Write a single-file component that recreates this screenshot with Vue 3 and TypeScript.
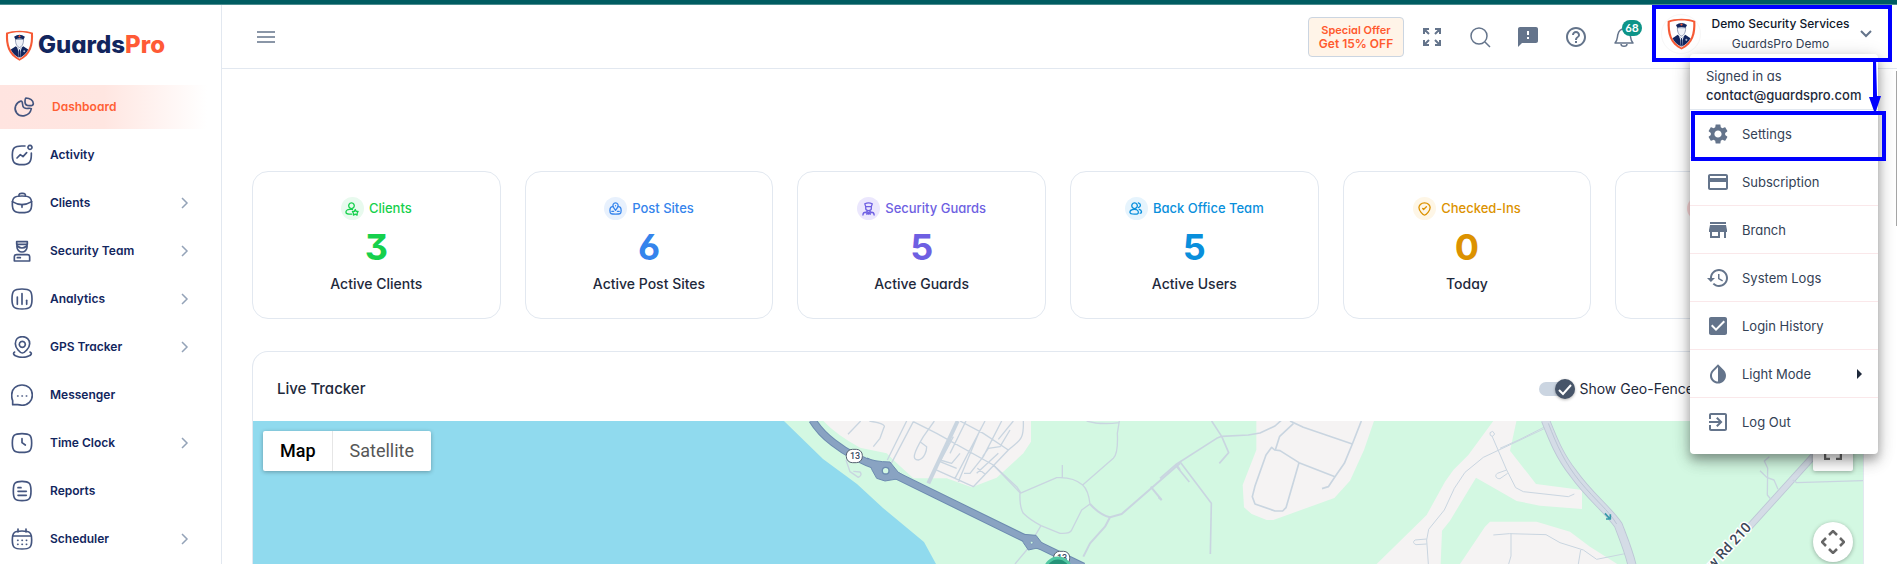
<script setup lang="ts">
import { ref } from 'vue'

interface NavItem { label: string; paths: string[]; expandable?: boolean; active?: boolean }
interface Stat { title: string; value: string; caption: string; color: string; tint: string; paths: string[] }
interface MenuItem { label: string; path: string; submenu?: boolean }

const nav: NavItem[] = [
  { label: 'Dashboard', active: true, paths: ['M24 15C8 20 1 38 11 51C22 65 50 62 55 38C48 34 42 41 33 35C25 29 32 16 24 15Z', 'M39 6C51 6 61 14 61 23C61 28 55 29 49 29C42 29 36 26 36 18C36 12 36 7 39 6Z'] },
  { label: 'Activity', paths: ['M42 6H32C10 6 4 12 4 33C4 55 10 62 32 62C54 62 61 55 61 33V27', 'M18 42L28 32L36 38L47 26', 'M57 4a6 6 0 1 1-.1 0Z'] },
  { label: 'Clients', expandable: true, paths: ['M24 12V8Q25 4 31 4H36Q42 4 43 8V12', 'M33 12C10 12 4 17 4 36C4 56 10 62 33 62C56 62 62 56 62 36C62 17 56 12 33 12Z', 'M4 29Q33 47 62 29', 'M33 38V46'] },
  { label: 'Security Team', expandable: true, paths: ['M17 5H49V13H17Z', 'M18 13V22C18 29 25 36 33 36S48 29 48 22V13', 'M19 18Q33 30 47 18', 'M17 44H49Q56 44 56 50V63H10V50Q10 44 17 44Z', 'M19 53H28'] },
  { label: 'Analytics', expandable: true, paths: ['M33 3C8 3 3 9 3 33S8 63 33 63S63 57 63 33S58 3 33 3Z', 'M19 27V49', 'M33 17V49', 'M47 37V49'] },
  { label: 'GPS Tracker', expandable: true, paths: ['M34 2C21 2 13 11 13 23C13 36 28 51 34 51S56 36 56 23C56 11 47 2 34 2Z', 'M34 16a9 9 0 1 1-.1 0Z', 'M11 48C5 51 8 58 15 60C27 65 42 65 53 60C61 58 64 51 57 48'] },
  { label: 'Messenger', paths: ['M2 33C2 15 15 3 33 3S64 15 64 33S51 64 33 64Q26 62 20 62H5V50Q2 44 2 33Z', 'M20 36H21', 'M33 36H34', 'M46 36H47'] },
  { label: 'Time Clock', expandable: true, paths: ['M33 5C9 5 4 10 4 33S9 61 33 61S62 56 62 33S57 5 33 5Z', 'M33 20V32L43 39'] },
  { label: 'Reports', paths: ['M33 4C11 4 7 10 7 33S11 62 33 62S60 56 60 33S55 4 33 4Z', 'M21 23H30', 'M21 34H46', 'M21 46H46'] },
  { label: 'Scheduler', expandable: true, paths: ['M33 9C9 9 4 14 4 36S9 63 33 63S62 58 62 36S57 9 33 9Z', 'M5 24H61', 'M21 3V12', 'M45 3V12', 'M20 37H21', 'M33 37H34', 'M46 37H47', 'M20 49H21', 'M33 49H34', 'M46 49H47'] },
]

const stats: Stat[] = [
  { title: 'Clients', value: '3', caption: 'Active Clients', color: '#16d04c', tint: '#e8faee', paths: ['M7 1a3 3 0 1 1-.1 0Z', 'M8 8H5C2 8 1 10 1 11C1 13 3 13 7 13', 'M11 8L12 10L14 10L13 12L13 14L11 13L9 14L9 12L8 10L10 10Z'] },
  { title: 'Post Sites', value: '6', caption: 'Active Post Sites', color: '#3584ec', tint: '#e8f1fd', paths: ['M4 5C1 5 1 7 1 9C1 13 2 13 7 13S13 13 13 9C13 7 13 5 10 5', 'M7 9L5 6C3 3 5 1 7 1S11 3 9 6Z', 'M7 4V4.1', 'M3 10H5M9 10H11'] },
  { title: 'Security Guards', value: '5', caption: 'Active Guards', color: '#6e5fe2', tint: '#ebe7fd', paths: ['M3 2Q7 0 11 2L10 5H4Z', 'M4 5V7C4 10 10 10 10 7V5', 'M1 14Q1 11 4 11L7 13L10 11Q13 11 13 14', 'M5 10L9 13', 'M9 10L5 13'] },
  { title: 'Back Office Team', value: '5', caption: 'Active Users', color: '#098fdc', tint: '#e6f4fd', paths: ['M6 1a3 3 0 1 1-.1 0Z', 'M6 8C2 8 1 10 1 11C1 13 3 13 6 13S10 13 10 11C10 10 9 8 6 8Z', 'M10 1C13 2 13 5 10 6', 'M11 8C14 9 14 12 12 12'] },
  { title: 'Checked-Ins', value: '0', caption: 'Today', color: '#dc9200', tint: '#fef6e6', paths: ['M7 1C3 1 1 4 1 6C1 9 5 14 7 14S13 9 13 6C13 4 11 1 7 1Z', 'M5 7L6 8L9 5'] },
  { title: '', value: '', caption: '', color: '#e5484d', tint: '#fdd9da', paths: [] },
]

const menu: MenuItem[] = [
  { label: 'Settings', path: 'M19.14 12.94c.04-.3.06-.61.06-.94 0-.32-.02-.64-.07-.94l2.03-1.58c.18-.14.23-.41.12-.61l-1.92-3.32c-.12-.22-.37-.29-.59-.22l-2.39.96c-.5-.38-1.03-.7-1.62-.94l-.36-2.54c-.04-.24-.24-.41-.48-.41h-3.84c-.24 0-.43.17-.47.41l-.36 2.54c-.59.24-1.13.57-1.62.94l-2.39-.96c-.22-.08-.47 0-.59.22L2.74 8.87c-.12.21-.08.47.12.61l2.03 1.58c-.05.3-.09.63-.09.94s.02.64.07.94l-2.03 1.58c-.18.14-.23.41-.12.61l1.92 3.32c.12.22.37.29.59.22l2.39-.96c.5.38 1.03.7 1.62.94l.36 2.54c.05.24.24.41.48.41h3.84c.24 0 .44-.17.47-.41l.36-2.54c.59-.24 1.13-.56 1.62-.94l2.39.96c.22.08.47 0 .59-.22l1.92-3.32c.12-.22.07-.47-.12-.61l-2.01-1.58zM12 15.6c-1.98 0-3.6-1.62-3.6-3.6s1.62-3.6 3.6-3.6 3.6 1.62 3.6 3.6-1.62 3.6-3.6 3.6z' },
  { label: 'Subscription', path: 'M20 4H4c-1.11 0-1.99.89-1.99 2L2 18c0 1.11.89 2 2 2h16c1.11 0 2-.89 2-2V6c0-1.11-.89-2-2-2zm0 14H4v-6h16v6zm0-10H4V6h16v2z' },
  { label: 'Branch', path: 'M20 4H4v2h16V4zm1 10v-2l-1-5H4l-1 5v2h1v6h10v-6h4v6h2v-6h1zm-9 4H6v-4h6v4z' },
  { label: 'System Logs', path: 'M13 3c-4.97 0-9 4.03-9 9H1l3.89 3.89.07.14L9 12H6c0-3.87 3.13-7 7-7s7 3.13 7 7-3.13 7-7 7c-1.93 0-3.68-.79-4.94-2.06l-1.42 1.42C8.27 19.99 10.51 21 13 21c4.97 0 9-4.03 9-9s-4.03-9-9-9zm-1 5v5l4.28 2.54.72-1.21-3.5-2.08V8H12z' },
  { label: 'Login History', path: 'M19 3H5c-1.11 0-2 .9-2 2v14c0 1.1.89 2 2 2h14c1.11 0 2-.9 2-2V5c0-1.1-.89-2-2-2zm-9 14l-5-5 1.41-1.41L10 14.17l7.59-7.59L19 8l-9 9z' },
  { label: 'Light Mode', submenu: true, path: 'M17.66 7.93L12 2.27 6.34 7.93c-3.12 3.12-3.12 8.19 0 11.31C7.9 20.8 9.95 21.58 12 21.58c2.05 0 4.1-.78 5.66-2.34 3.12-3.12 3.12-8.19 0-11.31zM12 19.59c-1.6 0-3.11-.62-4.24-1.76C6.62 16.69 6 15.19 6 13.59s.62-3.11 1.76-4.24L12 5.1v14.49z' },
  { label: 'Log Out', path: 'M10.09 15.59L11.5 17l5-5-5-5-1.41 1.41L12.67 11H3v2h9.67l-2.58 2.59zM19 3H5c-1.11 0-2 .9-2 2v4h2V5h14v14H5v-4H3v4c0 1.1.89 2 2 2h14c1.1 0 2-.9 2-2V5c0-1.1-.9-2-2-2z' },
]

const geoFence = ref(true)
</script>

<template>
  <div class="page">
    <svg class="defs" aria-hidden="true">
      <symbol id="shield" viewBox="0 0 84 92">
        <path d="M42 2C27 2 12 4 2 8C0 44 7 74 42 91C77 74 84 44 82 8C72 4 57 2 42 2Z" fill="#f65a35" />
        <path d="M42 7C29 7 16 9 8 12C7 44 13 69 42 85C71 69 77 44 76 12C68 9 55 7 42 7Z" fill="#fff" />
        <path d="M16 58L31 48L42 58L53 48L68 58C63 69 55 76 42 83C29 76 21 69 16 58Z" fill="#12265e" />
        <path d="M30 28C30 42 35 50 42 52C49 50 54 42 54 28Z" fill="#eef1f7" stroke="#6a7899" stroke-width="2" />
        <path d="M26 20Q42 8 58 20L54 28Q42 23 30 28Z" fill="#12265e" />
        <path d="M38 19L42 15L46 19L42 22Z" fill="#f65a35" />
        <path d="M34 50L42 58L50 50L45 64L44 82H40L39 64Z" fill="#dfe5f0" />
        <path d="M42 58V80" stroke="#12265e" stroke-width="3" />
        <circle cx="56" cy="63" r="3" fill="#a9b7d0" />
      </symbol>
    </svg>

    <div class="topline"></div>
    <div class="shell">
      <aside class="sidebar">
        <a href="#" class="brand">
          <svg class="brand-mark" aria-hidden="true"><use href="#shield" /></svg>
          <span class="brand-name">Guards<span class="pro">Pro</span></span>
        </a>
        <nav>
          <a v-for="item in nav" :key="item.label" href="#" class="nav-item" :class="{ active: item.active }">
            <svg class="nav-icon" viewBox="0 0 66 66" aria-hidden="true"><path v-for="d in item.paths" :key="d" :d="d" /></svg>
            <span class="nav-label">{{ item.label }}</span>
            <svg v-if="item.expandable" class="chevron" viewBox="0 0 8 14" aria-hidden="true"><path d="M1 2L6 7L1 12" /></svg>
          </a>
        </nav>
      </aside>

      <div class="content">
        <header class="header">
          <button class="icon-btn" aria-label="Toggle navigation">
            <svg width="20" height="20" viewBox="0 0 20 20" class="line-icon"><path d="M1 5H19M1 10H19M1 15H19" /></svg>
          </button>
          <div class="tools">
            <button class="offer"><span class="offer-top">Special Offer</span><span class="offer-main">Get 15% OFF</span></button>
            <button class="icon-btn" aria-label="Full screen">
              <svg width="24" height="24" viewBox="0 0 24 24" class="bold-line"><path d="M4 9V4H9M4 4L9 9M15 4H20V9M20 4L15 9M4 15V20H9M4 20L9 15M20 15V20H15M20 20L15 15" /></svg>
            </button>
            <button class="icon-btn" aria-label="Search">
              <svg width="24" height="24" viewBox="0 0 24 24" class="line-icon"><circle cx="11" cy="11" r="8" /><path d="M17 17L22 22" /></svg>
            </button>
            <button class="icon-btn" aria-label="Feedback">
              <svg width="24" height="24" viewBox="0 0 24 24" class="fill-icon"><path d="M20 2H4c-1.1 0-1.99.9-1.99 2L2 22l4-4h14c1.1 0 2-.9 2-2V4c0-1.1-.9-2-2-2zm-7 12h-2v-2h2v2zm0-4h-2V6h2v4z" /></svg>
            </button>
            <button class="icon-btn" aria-label="Help">
              <svg width="24" height="24" viewBox="0 0 24 24" class="fill-icon"><path d="M11 18h2v-2h-2v2zm1-16C6.48 2 2 6.48 2 12s4.48 10 10 10 10-4.48 10-10S17.52 2 12 2zm0 18c-4.41 0-8-3.59-8-8s3.59-8 8-8 8 3.59 8 8-3.59 8-8 8zm0-14c-2.21 0-4 1.79-4 4h2c0-1.1.9-2 2-2s2 .9 2 2c0 2-3 1.75-3 5h2c0-2.25 3-2.5 3-5 0-2.21-1.79-4-4-4z" /></svg>
            </button>
            <button class="icon-btn" aria-label="Notifications">
              <svg width="24" height="24" viewBox="0 0 24 24" class="line-icon"><path d="M3 18C6 15 5 12 6 9C7 5 9 4 12 4S17 5 18 9C19 12 18 15 21 18ZM9 19C9 22 15 22 15 19" /></svg>
              <span class="badge">68</span>
            </button>

            <div class="account">
              <button class="profile" aria-haspopup="menu" aria-expanded="true">
                <span class="avatar"><svg aria-hidden="true"><use href="#shield" /></svg></span>
                <span class="who"><span class="company">Demo Security Services</span><span class="person">GuardsPro Demo</span></span>
                <svg class="down" viewBox="0 0 12 8" aria-hidden="true"><path d="M1 1L6 6L11 1" /></svg>
              </button>
              <div class="dropdown">
                <div class="signed"><span>Signed in as</span><span class="email">contact@guardspro.com</span></div>
                <ul>
                  <li v-for="m in menu" :key="m.label">
                    <button class="menu-item">
                      <svg width="24" height="24" viewBox="0 0 24 24" class="fill-icon" aria-hidden="true"><path :d="m.path" /></svg>
                      <span>{{ m.label }}</span>
                      <svg v-if="m.submenu" class="caret" viewBox="0 0 5 10" aria-hidden="true"><path d="M0 0L5 5L0 10Z" /></svg>
                    </button>
                  </li>
                </ul>
              </div>
              <div class="mark mark-profile"></div>
              <div class="mark mark-settings"></div>
              <svg class="mark-arrow" viewBox="0 0 12 54" aria-hidden="true"><path d="M4 0H7L8 36H12L6 54L0 37H4Z" /></svg>
            </div>
          </div>
        </header>

        <main>
          <section class="stats">
            <article v-for="(s, i) in stats" :key="i" class="card">
              <div class="card-title" :style="{ color: s.color }">
                <span class="card-badge" :style="{ background: s.tint }"><svg viewBox="0 0 15 15" aria-hidden="true"><path v-for="d in s.paths" :key="d" :d="d" /></svg></span>
                <span class="card-name">{{ s.title }}</span>
              </div>
              <div class="card-value" :style="{ color: s.color }">{{ s.value }}</div>
              <div class="card-caption">{{ s.caption }}</div>
            </article>
          </section>

          <section class="tracker">
            <div class="tracker-head">
              <h2>Live Tracker</h2>
              <label class="toggle" for="geo">
                <input id="geo" v-model="geoFence" type="checkbox" />
                <span class="track"><span class="knob"><svg viewBox="0 0 20 20" aria-hidden="true"><path d="M4 11L8 15L16 6" /></svg></span></span>
                Show Geo-Fence
              </label>
            </div>
            <div class="map">
              <svg class="map-art" viewBox="253 421 1610 143" preserveAspectRatio="xMidYMin slice" aria-hidden="true">
                <path d="M253 421H1863V700H253Z" fill="#d3f8e2" />
                <path d="M253 421H784L823 459L857 484L883 508L924 542L936 564L980 700H253Z" fill="#90daee" />
                <g transform="translate(780 410) scale(.333333)" fill="none" stroke="#c9d5e0" stroke-width="4" stroke-linejoin="round">
                  <path d="M130 33Q170 75 240 113L320 130Q350 160 400 205L500 205L575 232L650 203L730 130L753 95V33Z" fill="#f5f3f3" stroke="none" />
                  <path d="M204 73L242 33M268 33C300 38 318 45 312 52L300 85L280 110M380 33L322 150M400 35L334 160M400 35L470 70L640 165L710 230L722 248M463 33L430 80C400 130 395 150 415 150C435 145 440 120 440 110L422 97M540 33L610 70L685 120M730 33C732 90 720 90 685 120L580 230L465 178M520 80L480 155L530 175M558 33L510 130M615 33L525 205M600 60L535 215M665 33L610 140L570 190L552 190M690 60L660 110L625 115L608 140M655 130L590 190M592 175L615 192M700 33L655 88M480 150L515 160L540 130" />
                  <path d="M533 33L445 220" stroke-width="12" />
                  <path d="M640 165L720 248Q718 290 730 310Q750 330 783 347L840 370Q870 372 875 360L905 300L930 282Q925 240 908 225Q880 200 830 203L720 250M847 165V202M908 225L1000 145Q1015 130 1012 70L1018 33M920 33Q960 45 1018 38M783 347L740 420L705 462M198 150L210 185L235 202Q248 195 240 186L220 184" />
                  <path d="M930 282Q960 315 990 322L1025 312L1200 160M990 322L975 350L930 400L910 440M1112 230L1145 270M1190 165L1200 180" stroke-width="6" />
                  <path d="M97 30Q120 68 160 98Q220 145 300 172L340 192L730 383L770 402L910 470" stroke="#6c8bb0" stroke-width="24" />
                  <path d="M262 144Q280 155 330 156L355 187L385 205L345 208L315 213L290 205L275 178ZM720 372L768 376L785 398L820 425L768 415L745 420L730 398Z" fill="#89a3c2" stroke="#6c8bb0" stroke-width="3" />
                  <path d="M97 30Q120 68 160 98Q220 145 300 172L340 192L730 383L770 402L910 470" stroke="#89a3c2" stroke-width="18" />
                  <circle cx="317" cy="182" r="10" fill="#d3f8e2" stroke="#6c8bb0" /><circle cx="755" cy="398" r="4" fill="#d3f8e2" stroke="#6c8bb0" stroke-width="2" />
                  <rect x="199" y="118" width="48" height="40" rx="18" fill="#fff" stroke="#54616e" stroke-width="3" />
                  <rect x="821" y="424" width="48" height="40" rx="18" fill="#fff" stroke="#54616e" stroke-width="3" />
                </g>
                <text x="855" y="459" class="route">13</text>
                <text x="1062" y="561" class="route">13</text>
                <circle cx="1058" cy="571" r="13" fill="#249378" stroke="#51c7a2" stroke-width="3" />
                <g transform="translate(1160 410) scale(.333333)" fill="none" stroke="#c9d5e0" stroke-width="5" stroke-linejoin="round">
                  <path d="M289 30V120L248 225L252 292L275 312L320 330H340L523 264L570 212L612 120L643 30Z" fill="#f5f3f3" stroke="none" />
                  <path d="M1002 30L925 135L880 180L855 215L800 315L650 462H842L846 362L870 332L948 203L1070 273L1140 287L1266 297V240L1128 222L1050 122L1070 30Z" fill="#f5f3f3" stroke="none" />
                  <path d="M900 462L975 350L990 335H1130L1230 365L1290 410L1400 480H900Z" fill="#f5f3f3" stroke="none" />
                  <path d="M0 205L50 162L170 85L185 79L265 75L300 69L345 48L365 30M155 33L185 79L206 128L178 160M60 155L154 280L151 432M48 167L88 216M-5 262L5 270" stroke-width="5" />
                  <path d="M390 33L430 52L577 102L604 33M400 41L359 79L346 120M577 102L553 160L525 200L505 230L486 236M525 200L417 158L360 122L344 120L335 112L318 135L285 228L277 260L285 282L345 303H368L378 293L417 158" />
                  <path d="M805 462L800 390L806 358L853 300L883 235L915 187L970 142L1155 55M1000 375L1048 371L1158 374L1200 398L1270 420L1310 448L1400 430M1053 371V438L1046 462M1262 420L1255 462M996 78L1040 180L1067 233L1090 245L1225 260L1243 252M1040 180L1012 190C1002 198 1010 207 1020 206L1043 190M800 387L765 390Q755 398 768 404L800 402M990 68L998 64L1004 72L998 79L991 76Z" stroke-width="3" />
                </g>
                <g transform="translate(1500 360) scale(.333333)" fill="none" stroke-linejoin="round">
                  <path d="M0 265L60 238L135 200" stroke="#c9d5e0" stroke-width="3" />
                  <path d="M136 180C160 240 180 290 220 340C270 410 320 445 355 495C370 535 385 570 396 615" stroke="#bcc6d5" stroke-width="27" />
                  <path d="M136 180C160 240 180 290 220 340C270 410 320 445 355 495C370 535 385 570 396 615" stroke="#d4dce6" stroke-width="22" />
                  <path d="M145 190C170 255 195 310 240 365C290 425 325 450 350 492" stroke="#bcc6d5" stroke-width="3" />
                  <path d="M315 460L330 477M318 477H331V463" stroke="#369aa9" stroke-width="5" />
                  <path d="M1000 222L735 515" stroke="#bcc6d5" stroke-width="21" /><path d="M1000 222L735 515" stroke="#d4dce6" stroke-width="16" />
                  <path d="M808 290L793 303L803 325L802 405L812 417M780 332L800 352L822 360L834 388M878 360L890 368L1090 362" stroke="#c9d5e0" stroke-width="4" />
                </g>
                <text class="road" text-anchor="end" transform="translate(1752 528) rotate(-47)">w Rd 210</text>
              </svg>
              <div class="map-type"><button class="on">Map</button><button>Satellite</button></div>
              <button class="map-full" aria-label="Toggle fullscreen map"><svg viewBox="0 0 18 18"><path d="M1 6V1H6M12 1H17V6M1 12V17H6M12 17H17V12" /></svg></button>
              <button class="map-move" aria-label="Map camera controls"><svg viewBox="0 0 24 24"><path d="M8 5L12 1L16 5M8 19L12 23L16 19M5 8L1 12L5 16M19 8L23 12L19 16" /></svg></button>
            </div>
          </section>
        </main>
      </div>
    </div>
    <div class="scroll-thumb"></div>
  </div>
</template>

<style>
body { margin: 0; background: #fff; overflow: hidden; }
</style>

<style scoped>
* { box-sizing: border-box; }
.page { position: relative; display: flex; flex-direction: column; height: 100vh; overflow: hidden; font-family: Inter, "Liberation Sans", sans-serif; font-feature-settings: "cv11", "cv09", "cv04", "cv03"; font-size: 14px; color: #1e293b; }
button { font: inherit; font-feature-settings: inherit; color: inherit; background: none; border: 0; padding: 0; cursor: pointer; }
a { color: inherit; text-decoration: none; }
svg { display: block; flex: none; }
.defs { position: absolute; width: 0; height: 0; }
.topline { flex: none; height: 5px; background: #005c61; border-bottom: 1px solid #4c8d90; }
.shell { display: flex; flex: 1; min-height: 0; }
.sidebar { flex: none; width: 222px; border-right: 1px solid #e2e8f0; }
.brand { display: flex; align-items: center; gap: 4px; height: 80px; padding-left: 5px; }
.brand-mark { width: 29px; height: 31px; }
.brand-name { font-size: 24px; line-height: 30px; font-weight: 800; color: #12265e; }
.pro { color: #ff5a36; }
.nav-item { display: flex; align-items: center; height: 44px; margin-bottom: 4px; padding: 0 32px 1px 11px; font-size: 12px; font-weight: 600; color: #12265e; }
.nav-item.active { padding-left: 13px; margin-right: 14px; color: #ff5f35; background: linear-gradient(90deg, #ffe4e0 0%, #ffe6e1 50%, #fff 100%); }
.nav-icon { width: 22px; height: 22px; margin-right: 17px; fill: none; stroke: #44557f; stroke-width: 5; stroke-linecap: round; stroke-linejoin: round; }
.nav-label { flex: 1; }
.chevron { width: 8px; height: 14px; fill: none; stroke: #94a3b8; stroke-width: 1.5; }
.content { display: flex; flex-direction: column; flex: 1; min-width: 0; }
.header { position: relative; z-index: 2; flex: none; display: flex; align-items: center; justify-content: space-between; height: 64px; padding: 0 5px 0 24px; border-bottom: 1px solid #e2e8f0; }
.tools { display: flex; align-items: center; gap: 8px; height: 100%; }
.icon-btn { position: relative; display: grid; place-items: center; width: 40px; height: 40px; }
.line-icon, .bold-line { fill: none; stroke: #64748b; stroke-width: 1.5; stroke-linejoin: round; }
.bold-line { stroke-width: 2; stroke-linejoin: miter; }
.fill-icon { fill: #64748b; }
.offer { display: flex; flex-direction: column; align-items: center; justify-content: center; width: 96px; height: 40px; border: 1px solid #cbd5e1; border-radius: 4px; background: #fff4e8; color: #ff5a2f; font-weight: 600; }
.offer-top { font-size: 11px; line-height: 14px; }
.offer-main { font-size: 12px; line-height: 14px; }
.badge { position: absolute; top: 3px; right: 2px; min-width: 20px; height: 16px; border-radius: 8px; background: #0d9488; color: #fff; font-size: 11px; line-height: 16px; font-weight: 600; }
.account { position: relative; align-self: flex-start; width: 240px; }
.profile { display: flex; align-items: center; width: 100%; height: 57px; padding: 0 20px 0 9px; }
.avatar { display: grid; place-items: center; width: 40px; height: 40px; border: 1px solid #f7f7f7; border-radius: 20px; }
.avatar svg { width: 29px; height: 32px; }
.who { flex: 1; display: flex; flex-direction: column; align-items: center; font-size: 12px; line-height: 20px; }
.company { font-weight: 500; color: #0f172a; }
.person { color: #334155; }
.down { width: 12px; height: 8px; fill: none; stroke: #64748b; stroke-width: 2; }
.dropdown { position: absolute; z-index: 1; top: 49px; right: 14px; width: 188px; padding-bottom: 8px; border-radius: 4px; background: #fff; font-size: 13px; color: #334155; box-shadow: 0 5px 8px rgba(0, 0, 0, .2), 0 8px 16px rgba(0, 0, 0, .18), 0 3px 20px rgba(0, 0, 0, .14); }
.signed { display: flex; flex-direction: column; height: 56px; padding: 13px 0 0 16px; line-height: 19px; border-bottom: 1px solid #e2e8f0; }
.email { font-weight: 500; color: #1e293b; }
.dropdown ul { list-style: none; margin: 0; padding: 0; }
.dropdown li { height: 48px; border-bottom: 1px solid #fae8ea; }
.dropdown li:last-child { border-bottom: 0; }
.menu-item { display: flex; align-items: center; gap: 12px; width: 100%; height: 100%; padding: 0 16px; }
.caret { width: 5px; height: 10px; margin-left: auto; fill: #1e293b; }
.mark { position: absolute; z-index: 2; border: 4px solid #00f; pointer-events: none; }
.mark-profile { inset: 0; }
.mark-settings { top: 106px; right: 6px; width: 195px; height: 50px; }
.mark-arrow { position: absolute; z-index: 2; top: 55px; right: 11px; width: 12px; height: 54px; fill: #00f; pointer-events: none; }
main { flex: 1; min-height: 0; display: flex; flex-direction: column; gap: 32px; padding: 102px 33px 0 30px; }
.stats { display: grid; grid-template-columns: repeat(6, minmax(0, 1fr)); gap: 24px; }
.card { display: flex; flex-direction: column; align-items: center; height: 148px; padding-top: 25px; border: 1px solid #e2e8f0; border-radius: 16px; background: #fff; }
.card-title { display: flex; align-items: center; gap: 5px; height: 24px; font-size: 13px; font-weight: 500; line-height: 20px; padding-bottom: 1px; }
.card-badge { display: grid; place-items: center; width: 23px; height: 23px; border-radius: 12px; }
.card-badge svg { width: 14px; height: 14px; fill: none; stroke: currentColor; stroke-width: 1.4; stroke-linejoin: round; stroke-linecap: round; }
.card-name { padding-bottom: 2px; }
.card-name:empty { width: 78px; }
.card-value { font-size: 36px; line-height: 52px; font-weight: 700; }
.card-caption { line-height: 22px; font-weight: 500; }
.tracker { flex: 1; min-height: 0; display: flex; flex-direction: column; border: 1px solid #e2e8f0; border-bottom: 0; border-radius: 16px 16px 0 0; overflow: hidden; }
.tracker-head { flex: none; display: flex; align-items: center; justify-content: space-between; height: 69px; padding: 4px 169px 0 24px; }
h2 { margin: 0; font-size: 15px; line-height: 24px; font-weight: 500; }
.toggle { display: flex; align-items: center; gap: 4px; white-space: nowrap; position: relative; }
.toggle input { position: absolute; opacity: 0; width: 36px; height: 20px; margin: 0; }
.track { display: flex; align-items: center; justify-content: flex-end; width: 36px; height: 14px; border-radius: 7px; background: #cbd5e1; }
.knob { flex: none; width: 20px; height: 20px; border-radius: 10px; background: #475569; box-shadow: 0 1px 3px rgba(0, 0, 0, .3); }
.knob path { fill: none; stroke: #fff; stroke-width: 2; }
.map { position: relative; flex: 1; min-height: 0; overflow: hidden; }
.map-art { width: 100%; height: 100%; }
.route { font: 500 9px Roboto, sans-serif; text-anchor: middle; fill: #394d63; }
.road { font: 500 14px Roboto, sans-serif; fill: #3b4656; stroke: #fff; stroke-width: 3; paint-order: stroke; }
.map-type { position: absolute; top: 10px; left: 10px; display: flex; height: 40px; border-radius: 2px; background: #fff; box-shadow: 0 1px 4px rgba(0, 0, 0, .3); font: 18px/40px Roboto, sans-serif; }
.map-type button { padding: 0 17px; color: #565656; }
.map-type .on { padding-right: 16px; font-weight: 500; color: #000; border-right: 1px solid #e6e6e6; }
.map-full, .map-move { position: absolute; right: 10px; display: grid; place-items: center; width: 40px; height: 40px; background: #fff; box-shadow: 0 1px 4px rgba(0, 0, 0, .3); }
.map-full { top: 10px; border-radius: 2px; }
.map-move { top: 101px; border-radius: 20px; }
.map-full svg { width: 18px; height: 18px; }
.map-move svg { width: 24px; height: 24px; }
.map-full path, .map-move path { fill: none; stroke: #666; stroke-width: 2.5; }
.scroll-thumb { position: absolute; top: 71px; right: 0; width: 1px; height: 155px; background: #a5a5a5; }
</style>
